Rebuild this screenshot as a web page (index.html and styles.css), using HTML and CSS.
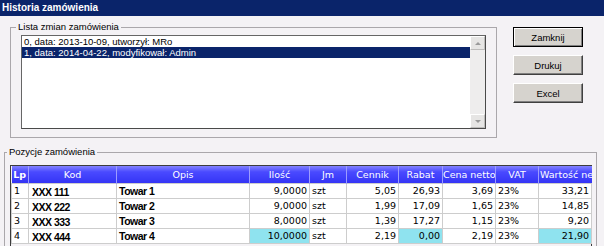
FILE: index.html
```html
<!DOCTYPE html>
<html lang="pl">
<head>
  <meta charset="UTF-8" />
  <title>Historia zamówienia</title>
<link rel="stylesheet" href="styles.css">
</head>
<body>

  <div class="caption">Historia zamówienia</div>

  <div class="top">
    <!-- Lista zmian -->
    <fieldset class="group group-history">
      <legend>Lista zmian zamówienia</legend>
      <div class="listbox">
        <ul class="list-items">
          <li>0, data: 2013-10-09, utworzył: MRo</li>
          <li class="selected">1, data: 2014-04-22, modyfikował: Admin</li>
        </ul>
        <div class="scrollbar">
          <span class="scroll-btn"><span class="arrow-up"></span></span>
          <span class="scroll-track"></span>
          <span class="scroll-btn"><span class="arrow-down"></span></span>
        </div>
      </div>
    </fieldset>

    <div class="buttons">
      <button class="btn btn-default">Zamknij</button>
      <button class="btn">Drukuj</button>
      <button class="btn">Excel</button>
    </div>
  </div>

  <!-- Pozycje -->
  <fieldset class="group group-items">
    <legend>Pozycje zamówienia</legend>
    <div class="grid">
      <table>
        <colgroup>
          <col style="width:17px"><col style="width:88px"><col style="width:133px"><col style="width:60px"><col style="width:37px">
          <col style="width:52px"><col style="width:44px"><col style="width:53px"><col style="width:43px"><col style="width:53px">
        </colgroup>
        <thead>
          <tr>
            <th class="lp">Lp</th>
            <th>Kod</th>
            <th>Opis</th>
            <th>Ilość</th>
            <th>Jm</th>
            <th>Cennik</th>
            <th>Rabat</th>
            <th>Cena netto</th>
            <th>VAT</th>
            <th class="clip">Wartość netto</th>
          </tr>
        </thead>
        <tbody>
          <tr>
            <td>1</td><td class="kod">XXX 111</td><td class="opis">Towar 1</td><td class="num">9,0000</td><td>szt</td>
            <td class="num">5,05</td><td class="num">26,93</td><td class="num">3,69</td><td>23%</td><td class="num">33,21</td>
          </tr>
          <tr>
            <td>2</td><td class="kod">XXX 222</td><td class="opis">Towar 2</td><td class="num">9,0000</td><td>szt</td>
            <td class="num">1,99</td><td class="num">17,09</td><td class="num">1,65</td><td>23%</td><td class="num">14,85</td>
          </tr>
          <tr>
            <td>3</td><td class="kod">XXX 333</td><td class="opis">Towar 3</td><td class="num">8,0000</td><td>szt</td>
            <td class="num">1,39</td><td class="num">17,27</td><td class="num">1,15</td><td>23%</td><td class="num">9,20</td>
          </tr>
          <tr>
            <td>4</td><td class="kod">XXX 444</td><td class="opis">Towar 4</td><td class="num hl">10,0000</td><td>szt</td>
            <td class="num">2,19</td><td class="num hl">0,00</td><td class="num">2,19</td><td>23%</td><td class="num hl">21,90</td>
          </tr>
        </tbody>
      </table>
    </div>
  </fieldset>

</body>
</html>
```

FILE: styles.css
```css
* {
  box-sizing: border-box;
  margin: 0;
  padding: 0;
}

html, body {
  background: #f4f2f5;
  color: #000;
  font-family: 'Liberation Sans', Arial, sans-serif;
  font-size: 9.5px;
  height: 100%;
  overflow: hidden;
}

.caption {
  height: 16px;
  line-height: 16px;
  background: #0a246a;
  color: #fff;
  font-weight: bold;
  font-size: 10px;
  padding-left: 2px;
}

.top {
  display: flex;
  align-items: flex-start;
  gap: 16px;
  padding: 5px 0 0 10px;
}

.group {
  border: 1px solid #aaa7ab;
}

.group legend {
  line-height: 12px;
  padding: 0 2px;
}

.group-history {
  width: 487px;
  padding: 2px 10px 8px 10px;
}

.group-history legend {
  margin-left: -5px;
}

.listbox {
  display: flex;
  height: 94px;
  background: #fff;
  border: 1px solid #4a4a4a;
  border-top-color: #666;
  border-left-color: #666;
}

.list-items {
  flex: 1;
  list-style: none;
}

.list-items li {
  line-height: 11px;
  padding-left: 2px;
  white-space: nowrap;
}

.list-items li.selected {
  background: #0a246a;
  color: #fff;
}

.scrollbar {
  width: 15px;
  display: flex;
  flex-direction: column;
  background: #eeeded;
}

.scroll-track {
  flex: 1;
}

.scroll-btn {
  height: 14px;
  display: flex;
  align-items: center;
  justify-content: center;
  background: #e6e5e4;
  border: 1px solid #fff;
  border-right-color: #bdbcbb;
  border-bottom-color: #bdbcbb;
}

.arrow-up,
.arrow-down {
  width: 0;
  height: 0;
  border-left: 3px solid transparent;
  border-right: 3px solid transparent;
}

.arrow-up {
  border-bottom: 3px solid #9a9a9a;
}

.arrow-down {
  border-top: 3px solid #9a9a9a;
}

.buttons {
  display: flex;
  flex-direction: column;
  gap: 8px;
  margin-top: 6px;
}

.btn {
  width: 70px;
  height: 20px;
  background: #d6d3ce;
  font-family: 'Liberation Sans', Arial, sans-serif;
  font-size: 9.5px;
  color: #000;
  border: 1px solid;
  border-color: #fff #404040 #404040 #fff;
  box-shadow: inset -1px -1px 0 #808080;
}

.btn-default {
  border-color: #000;
  box-shadow: inset 1px 1px 0 #fff, inset -1px -1px 0 #808080;
}

.group-items {
  width: 593px;
  height: 200px;
  margin: 8px 0 0 4px;
  padding: 7px 4px 0 5px;
}

.group-items legend {
  margin-left: -3px;
}

.grid {
  width: 582px;
  height: 120px;
  border: 1px solid #3c3c3c;
  border-bottom: none;
}

.grid table {
  width: 580px;
  border-collapse: collapse;
  table-layout: fixed;
}

.grid th {
  height: 17px;
  background: linear-gradient(to bottom, #8282ff 0%, #4a4aff 35%, #3434f4 100%);
  color: #fff;
  font-family: 'DejaVu Sans', Verdana, sans-serif;
  font-size: 9.5px;
  font-weight: normal;
  text-align: center;
  border-left: 1px solid #9d9dff;
  white-space: nowrap;
  overflow: hidden;
}

.grid th.lp {
  font-weight: bold;
  border-left: none;
}

.grid th.clip {
  text-align: left;
  padding-left: 1px;
}

.grid td {
  height: 14px;
  background: #fff;
  border: 1px solid #cdcdcd;
  padding: 0 2px;
  font-family: 'DejaVu Sans', Verdana, sans-serif;
  font-size: 9.5px;
  line-height: 12px;
  white-space: nowrap;
  overflow: hidden;
}

.grid td.kod,
.grid td.opis {
  font-family: 'Liberation Sans', Arial, sans-serif;
  font-weight: bold;
  font-size: 10.5px;
  letter-spacing: -0.5px;
}

.grid td.kod {
  padding: 3px 2px 0 3px;
  line-height: 11px;
}

.grid td.num {
  text-align: right;
}

.grid td.hl {
  background: #8fe3ef;
}
```
